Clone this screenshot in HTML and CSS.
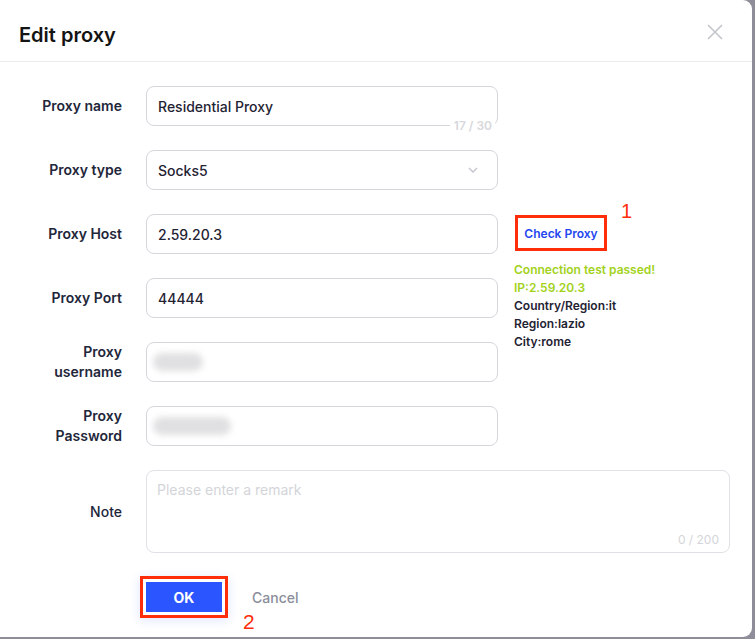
FILE: index.html
```html
<!DOCTYPE html>
<html lang="en">

<head>
    <meta charset="UTF-8">
    <meta name="viewport" content="width=device-width, initial-scale=1.0">
    <title>Edit proxy</title>
    <link rel="stylesheet" href="styles.css">
</head>

<body>
    <div class="dialog">
        <div class="dialog-header">
            <h2 class="dialog-title">Edit proxy</h2>
            <span class="dialog-close">
                <svg width="16" height="16" viewBox="0 0 16 16">
                    <path d="M1 1L15 15M15 1L1 15" stroke="#c3c5cc" stroke-width="1.6" fill="none" />
                </svg>
            </span>
        </div>

        <div class="dialog-body">
            <div class="form-row">
                <label class="form-label">Proxy name</label>
                <div class="form-field">
                    <div class="input">Residential Proxy</div>
                    <span class="counter">17 / 30</span>
                </div>
            </div>

            <div class="form-row">
                <label class="form-label">Proxy type</label>
                <div class="form-field">
                    <div class="input select">
                        Socks5
                        <svg class="arrow" width="10" height="6" viewBox="0 0 10 6">
                            <path d="M1 1L5 5L9 1" stroke="#c0c4cc" stroke-width="1.3" fill="none" />
                        </svg>
                    </div>
                </div>
            </div>

            <div class="form-row">
                <label class="form-label">Proxy Host</label>
                <div class="form-field">
                    <div class="input">2.59.20.3</div>
                </div>
                <div class="side">
                    <div class="check-wrap">
                        <button type="button" class="check-btn">Check Proxy</button>
                        <span class="mark mark-1">1</span>
                    </div>
                    <div class="check-result">
                        <div class="ok">Connection test passed!</div>
                        <div class="ok">IP:2.59.20.3</div>
                        <div>Country/Region:it</div>
                        <div>Region:lazio</div>
                        <div>City:rome</div>
                    </div>
                </div>
            </div>

            <div class="form-row">
                <label class="form-label">Proxy Port</label>
                <div class="form-field">
                    <div class="input">44444</div>
                </div>
            </div>

            <div class="form-row">
                <label class="form-label">Proxy<br>username</label>
                <div class="form-field">
                    <div class="input"><span class="blur" style="width: 50px"></span></div>
                </div>
            </div>

            <div class="form-row">
                <label class="form-label">Proxy<br>Password</label>
                <div class="form-field">
                    <div class="input"><span class="blur" style="width: 78px"></span></div>
                </div>
            </div>

            <div class="form-row note-row">
                <label class="form-label note-label">Note</label>
                <div class="form-field wide">
                    <div class="textarea">
                        <span class="placeholder">Please enter a remark</span>
                        <span class="textarea-count">0 / 200</span>
                    </div>
                </div>
            </div>

            <div class="form-footer">
                <div class="ok-wrap">
                    <button type="button" class="btn-ok">OK</button>
                    <span class="mark mark-2">2</span>
                </div>
                <button type="button" class="btn-cancel">Cancel</button>
            </div>
        </div>
    </div>
</body>

</html>
```

FILE: styles.css
```css
* {
    padding: 0;
    margin: 0;
    box-sizing: border-box;
}

html,
body {
    width: 100%;
    height: 100%;
}

body {
    background: #8e8d99;
    font-family: Inter, "Noto Sans", sans-serif;
    color: #1f2333;
    overflow: hidden;
}

.dialog {
    width: 752px;
    height: 637px;
    background: #fff;
    border-radius: 0 9px 9px 0;
}

.dialog-header {
    height: 62px;
    border-bottom: 1px solid #ebebee;
    display: flex;
    align-items: center;
    justify-content: space-between;
    padding: 0 29px 0 19px;
}

.dialog-title {
    font-size: 20px;
    font-weight: 600;
    color: #141414;
    padding-top: 8px;
}

.dialog-close {
    display: flex;
    padding-top: 3px;
}

.dialog-body {
    padding-top: 24px;
}

.form-row {
    display: flex;
    align-items: center;
    height: 40px;
    margin-bottom: 24px;
    position: relative;
}

.form-label {
    width: 122px;
    text-align: right;
    font-size: 14px;
    font-weight: 600;
    line-height: 20px;
    margin-right: 24px;
    color: #22263a;
}

.form-field {
    width: 352px;
    height: 40px;
    position: relative;
}

.form-field.wide {
    width: 584px;
    height: 83px;
}

.input {
    height: 40px;
    border: 1px solid #d5d6dc;
    border-radius: 8px;
    padding: 0 11px;
    display: flex;
    align-items: center;
    font-size: 14px;
    font-weight: 500;
    color: #1f2333;
}

.select {
    justify-content: space-between;
}

.select .arrow {
    margin-right: 8px;
}

.counter {
    position: absolute;
    right: 3px;
    top: 33px;
    background: #fff;
    padding: 0 3px 0 4px;
    font-size: 12px;
    font-weight: 600;
    color: #d6d7dc;
    line-height: 14px;
}

.blur {
    display: inline-block;
    height: 18px;
    border-radius: 9px;
    background: #e0e0e2;
    filter: blur(3px);
    margin-left: -5px;
}

.side {
    position: absolute;
    left: 514px;
    top: 0;
}

.check-wrap {
    position: relative;
}

.check-btn {
    border: 3px solid #ff2d0a;
    background: #fff;
    color: #2346f0;
    font-family: Inter, sans-serif;
    font-size: 12px;
    font-weight: 600;
    width: 92px;
    height: 36px;
    margin-left: 1px;
    margin-top: 1px;
}

.mark {
    position: absolute;
    color: #ff2d0a;
    font-family: "Liberation Sans", Arial, sans-serif;
    font-size: 20px;
    line-height: 20px;
}

.mark-1 {
    left: 107px;
    top: -13px;
}

.check-result {
    margin-top: 10px;
    font-size: 12px;
    font-weight: 600;
    line-height: 18px;
    color: #1f2333;
}

.check-result .ok {
    color: #a2d21b;
}

.note-row {
    height: 83px;
}

.note-label {
    font-weight: 500;
}

.textarea {
    height: 83px;
    border: 1px solid #e0e1e6;
    border-radius: 8px;
    position: relative;
    padding: 8px 10px;
}

.placeholder {
    font-size: 14px;
    color: #d4d5da;
}

.textarea-count {
    position: absolute;
    right: 10px;
    bottom: 5px;
    font-size: 12px;
    color: #d4d5da;
}

.form-footer {
    display: flex;
    align-items: center;
    padding-left: 140px;
    margin-top: -1px;
}

.ok-wrap {
    position: relative;
    border: 3px solid #ff2d0a;
    padding: 3px;
    box-shadow: 0 2px 10px rgba(40, 80, 255, 0.15);
}

.btn-ok {
    display: block;
    width: 76px;
    height: 30px;
    border: 0;
    background: #2b55ff;
    color: #fff;
    font-family: Inter, sans-serif;
    font-size: 14px;
    font-weight: 700;
}

.mark-2 {
    left: 100px;
    top: 33px;
    font-size: 21px;
}

.btn-cancel {
    border: 0;
    background: none;
    margin-left: 24px;
    font-family: Inter, sans-serif;
    font-size: 14px;
    font-weight: 500;
    color: #8a8e9a;
    padding-top: 0;
}
```
